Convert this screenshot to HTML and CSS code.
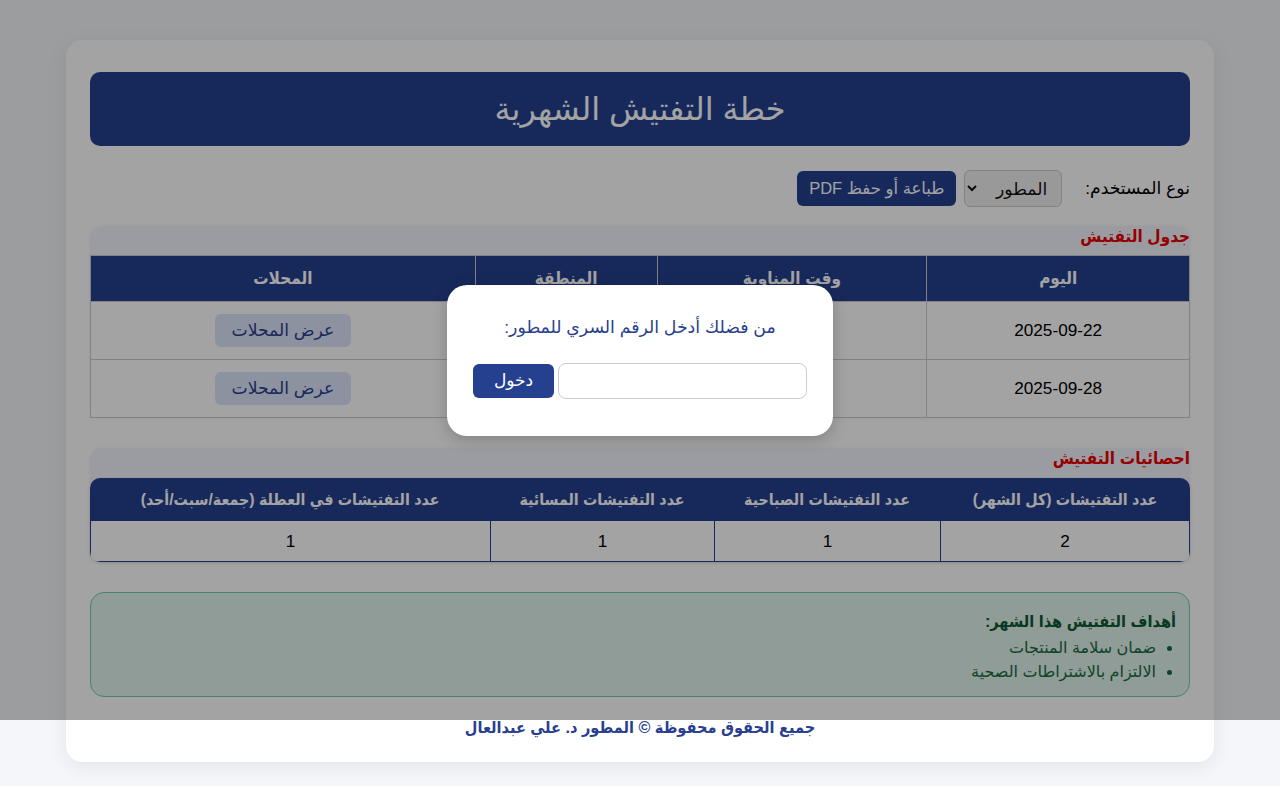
FILE: index.html
```html
<!DOCTYPE html>
<html lang="ar" dir="rtl">
<head>
<meta charset="utf-8">
<title>خطة التفتيش الشهرية</title>
<link rel="stylesheet" href="styles.css">
</head>
<body>
<div class="card">
  <header class="banner"><h1>خطة التفتيش الشهرية</h1></header>

  <div class="controls">
    <label class="ctl-label" for="role">نوع المستخدم:</label>
    <select id="role" class="role-select">
      <option>المطور</option>
    </select>
    <button class="btn-primary">طباعة أو حفظ PDF</button>
  </div>

  <section class="panel">
    <h3 class="panel-title">جدول التفتيش</h3>
    <table class="plan">
      <thead>
        <tr>
          <th class="c-day">اليوم</th>
          <th class="c-shift">وقت المناوبة</th>
          <th class="c-zone">المنطقة</th>
          <th class="c-shops">المحلات</th>
        </tr>
      </thead>
      <tbody>
        <tr>
          <td>2025-09-22</td>
          <td>صباحية</td>
          <td>المنطقة الأولى</td>
          <td><button class="btn-soft">عرض المحلات</button></td>
        </tr>
        <tr>
          <td>2025-09-28</td>
          <td>مسائية</td>
          <td>المنطقة الثانية</td>
          <td><button class="btn-soft">عرض المحلات</button></td>
        </tr>
      </tbody>
    </table>
  </section>

  <section class="panel panel-stats">
    <h3 class="panel-title">احصائيات التفتيش</h3>
    <table class="stats">
      <thead>
        <tr>
          <th class="s1">عدد التفتيشات (كل الشهر)</th>
          <th class="s2">عدد التفتيشات الصباحية</th>
          <th class="s3">عدد التفتيشات المسائية</th>
          <th class="s4">عدد التفتيشات في العطلة (جمعة/سبت/أحد)</th>
        </tr>
      </thead>
      <tbody>
        <tr><td>2</td><td>1</td><td>1</td><td>1</td></tr>
      </tbody>
    </table>
  </section>

  <div class="goals">
    <h4 class="goals-title">أهداف التفتيش هذا الشهر:</h4>
    <ul class="goals-list">
      <li>ضمان سلامة المنتجات</li>
      <li>الالتزام بالاشتراطات الصحية</li>
    </ul>
  </div>

  <footer class="foot">جميع الحقوق محفوظة © المطور د. علي عبدالعال</footer>
</div>

<div class="overlay">
  <div class="modal">
    <p class="modal-text">من فضلك أدخل الرقم السري للمطور:</p>
    <div class="modal-row">
      <input class="modal-input" type="password">
      <button class="modal-btn">دخول</button>
    </div>
  </div>
</div>
</body>
</html>
```

FILE: styles.css
```css
* { box-sizing: border-box; }

html, body {
  margin: 0;
  padding: 0;
}

body {
  background: #f4f6f9;
  font-family: "Liberation Sans", "DejaVu Sans", sans-serif;
  color: #111;
  font-size: 17.2px;
  padding: 40px 0 24px;
}

.panel-title,
.plan th,
.stats th,
.goals-title,
.foot {
  font-family: "Liberation Sans", "DejaVu Sans Condensed", "DejaVu Sans", sans-serif;
  font-weight: bold;
}

.card {
  width: 1148px;
  margin: 0 auto;
  background: #fff;
  border-radius: 16px;
  padding: 32px 24px 25px;
  box-shadow: 0 4px 20px rgba(0, 0, 0, 0.08);
}

.banner {
  background: #25408f;
  border-radius: 10px;
  height: 74px;
  display: flex;
  align-items: center;
  justify-content: center;
}

.banner h1 {
  margin: 0;
  color: #fff;
  font-size: 32px;
  font-weight: normal;
}

.controls {
  margin-top: 24px;
  display: flex;
  align-items: center;
  gap: 8px;
  height: 37px;
}

.ctl-label {
  margin-left: 15px;
  color: #000;
}

.role-select {
  width: 98px;
  height: 37px;
  font-family: inherit;
  font-size: 17.2px;
  padding: 0 10px;
  border: 1px solid #ccc;
  border-radius: 6px;
  background: #f0f0f0;
  color: #111;
}

.btn-primary {
  width: 159px;
  height: 35px;
  padding: 0;
  background: #25408f;
  color: #fff;
  border: none;
  border-radius: 6px;
  font-family: inherit;
  font-size: 16.5px;
}

.panel {
  margin-top: 19px;
  background: #f3f5fd;
  border-radius: 12px;
  box-shadow: 0 0 6px rgba(0, 0, 0, 0.04);
}

.panel-stats {
  margin-top: 30px;
}

.panel-title {
  margin: 0;
  padding-top: 0;
  height: 29px;
  line-height: 22px;
  font-size: 17px;
  color: #ea0000;
}

.panel-stats .panel-title {
  height: 30px;
}

.plan {
  width: 100%;
  border-collapse: collapse;
  background: #fff;
  border: 1px solid #ccc;
}

.plan th {
  background: #25408f;
  color: #fff;
  font-size: 17px;
  height: 46px;
  border: 1px solid #ccc;
  padding: 0 8px;
}

.plan td {
  height: 58px;
  text-align: center;
  border: 1px solid #ccc;
  color: #000;
  padding: 0 8px;
}

.c-day { width: 263px; }
.c-shift { width: 270px; }
.c-zone { width: 182px; }
.c-shops { width: 385px; }

.btn-soft {
  width: 136px;
  height: 33px;
  background: #dde5fb;
  color: #2c3e8f;
  border: none;
  border-radius: 6px;
  font-family: inherit;
  font-size: 17.2px;
  padding: 0;
}

.stats {
  width: 100%;
  border-collapse: separate;
  border-spacing: 0;
  background: #fff;
  border-radius: 10px;
  overflow: hidden;
  box-shadow: 0 1px 3px rgba(0, 0, 0, 0.15);
}

.stats th {
  background: #25408f;
  color: #fff;
  font-size: 15.8px;
  height: 43px;
  padding: 0 8px;
}

.stats td {
  height: 41px;
  text-align: center;
  color: #000;
  border-bottom: 1px solid #25408f;
  border-left: 1px solid #25408f;
}

.stats td:first-child { border-right: 1px solid #25408f; }

.s1 { width: 250px; }
.s2 { width: 226px; }
.s3 { width: 224px; }
.s4 { width: 400px; }

.goals {
  margin-top: 30px;
  background: #e1f4ec;
  border: 1px solid #6fcfa5;
  border-radius: 14px;
  padding: 16px 13px 12px;
  color: #176b40;
}

.goals-title {
  margin: 0 0 3px;
  font-size: 16.2px;
  line-height: 24px;
  color: #0f5a33;
}

.goals-list {
  margin: 0;
  padding: 0 20px 0 0;
  font-size: 16px;
  line-height: 24px;
}

.foot {
  margin-top: 20px;
  text-align: center;
  font-size: 16.2px;
  line-height: 20px;
  color: #2a3f8f;
}

.overlay {
  position: absolute;
  top: 0;
  left: 0;
  width: 100%;
  height: 720px;
  background: rgba(0, 0, 0, 0.36);
  display: flex;
  align-items: center;
  justify-content: center;
}

.modal {
  width: 386px;
  background: #fff;
  border-radius: 20px;
  padding: 28px 26px 37px;
  box-shadow: 0 4px 16px rgba(0, 0, 0, 0.2);
}

.modal-text {
  margin: 0 0 22px;
  text-align: center;
  color: #2a3f8f;
  font-size: 17.3px;
  line-height: 28px;
}

.modal-row {
  display: flex;
  align-items: center;
  gap: 4px;
}

.modal-input {
  flex: 1;
  height: 36px;
  border: 1px solid #ccc;
  border-radius: 8px;
  font-family: inherit;
  font-size: 16px;
  padding: 0 8px;
}

.modal-btn {
  width: 81px;
  height: 34px;
  background: #25408f;
  color: #fff;
  border: none;
  border-radius: 6px;
  font-family: inherit;
  font-size: 17px;
}
```
